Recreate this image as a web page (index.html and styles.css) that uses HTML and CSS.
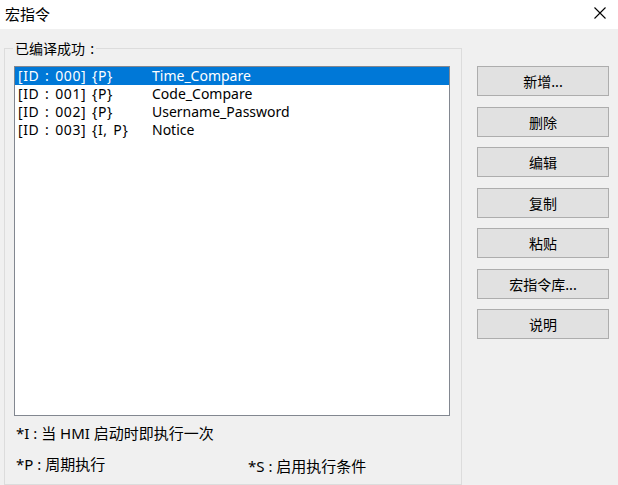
FILE: index.html
```html
<!DOCTYPE html>
<html lang="zh">
<head>
    <meta charset="UTF-8">
    <title>宏指令</title>
    <link rel="stylesheet" href="styles.css">
</head>
<body>
    <div class="dialog">
        <div class="titlebar">
            <span class="title">宏指令</span>
            <svg class="close" width="12" height="12" viewBox="0 0 12 12">
                <path d="M0.5 0.5 L11.5 11.5 M11.5 0.5 L0.5 11.5" stroke="#000" stroke-width="1.1" fill="none"/>
            </svg>
        </div>

        <div class="content">
            <div class="group">
                <span class="group-label">已编译成功 :</span>
                <div class="listbox">
                    <div class="row selected"><span class="id">[ID : 000] {P}</span><span>Time_Compare</span></div>
                    <div class="row"><span class="id">[ID : 001] {P}</span><span>Code_Compare</span></div>
                    <div class="row"><span class="id">[ID : 002] {P}</span><span>Username_Password</span></div>
                    <div class="row"><span class="id">[ID : 003] {I, P}</span><span>Notice</span></div>
                </div>
                <div class="note">*I : 当 HMI 启动时即执行一次</div>
                <div class="note-row">
                    <span class="note-p">*P : 周期执行</span>
                    <span class="note-s">*S : 启用执行条件</span>
                </div>
            </div>

            <div class="buttons">
                <button class="btn">新增...</button>
                <button class="btn">删除</button>
                <button class="btn">编辑</button>
                <button class="btn">复制</button>
                <button class="btn">粘贴</button>
                <button class="btn">宏指令库...</button>
                <button class="btn">说明</button>
            </div>
        </div>
    </div>
</body>
</html>
```

FILE: styles.css
```css
/* dialog */
body {
    margin: 0;
    font-family: "Noto Sans", "Noto Sans CJK SC", sans-serif;
    font-size: 14px;
    color: #000;
    background-color: #f0f0f0;
}

.dialog {
    width: 618px;
    height: 485px;
    background-color: #f0f0f0;
    overflow: hidden;
}

.titlebar {
    height: 29px;
    background-color: #fff;
    display: flex;
    align-items: center;
    justify-content: space-between;
    padding: 0 12px 0 5px;
}

.title {
    font-family: "Noto Sans CJK SC", sans-serif;
    font-size: 15px;
    margin-top: -3px;
}

.close {
    margin-top: -3px;
}

.content {
    display: flex;
    align-items: flex-start;
}

.group {
    position: relative;
    margin: 19px 0 0 4px;
    width: 447px;
    height: 418px;
    border: 1px solid #dcdcdc;
    padding: 17px 0 0 9px;
}

.group-label {
    position: absolute;
    left: 8px;
    top: -11px;
    padding: 0 2px;
    background-color: #f0f0f0;
    font-family: "Noto Sans CJK SC", sans-serif;
    font-size: 14px;
    line-height: 20px;
    word-spacing: 2px;
}

.listbox {
    width: 434px;
    height: 348px;
    border: 1px solid #828790;
    background-color: #fff;
}

.row {
    height: 18px;
    line-height: 18px;
    padding-left: 3px;
    display: flex;
    white-space: nowrap;
}

.row .id {
    width: 134px;
    letter-spacing: 0.6px;
    word-spacing: 1.5px;
}

.selected {
    background-color: #0078d7;
    color: #fff;
}

.note {
    margin: 7px 0 0 2px;
    line-height: 20px;
    font-size: 15px;
}

.note-row {
    display: flex;
    margin: 11px 0 0 2px;
    line-height: 20px;
    font-size: 15px;
}

.note-p {
    width: 232px;
}

.note-s {
    margin-top: 2px;
}

.buttons {
    display: flex;
    flex-direction: column;
    gap: 10.5px;
    margin: 37px 0 0 15px;
}

.btn {
    width: 132px;
    height: 30px;
    background-color: #e1e1e1;
    border: 1px solid #adadad;
    font-family: "Noto Sans CJK SC", sans-serif;
    font-size: 14px;
    padding: 0;
    color: #000;
}
```
